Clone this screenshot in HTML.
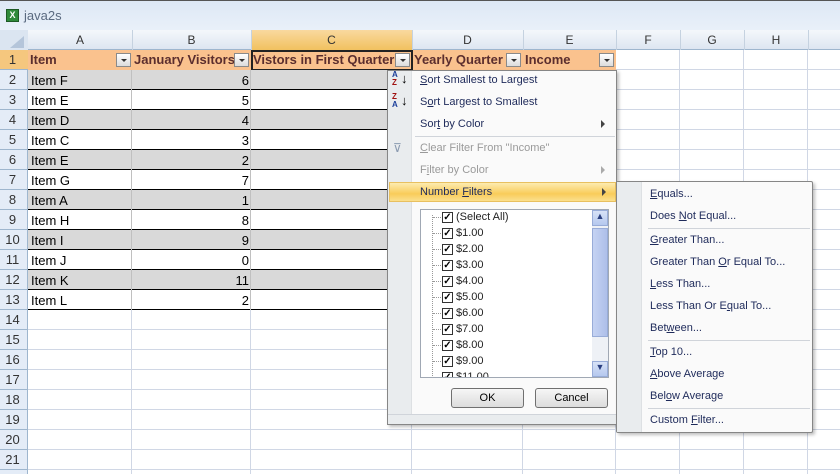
<!DOCTYPE html>
<html><head><meta charset="utf-8"><style>
*{margin:0;padding:0;box-sizing:border-box}
html,body{width:840px;height:474px;overflow:hidden}
body{background:#fff;font-family:"Liberation Sans",sans-serif;position:relative}
.a{position:absolute}
.t{font-size:13px;color:#000;white-space:nowrap}
.mi{position:absolute;font-size:11px;color:#1e2a5a;white-space:nowrap}
.dis{color:#9a9a9a}
.sep{position:absolute;height:1px;background:#d0d4da}
.dd{position:absolute;width:15px;height:14px;border:1px solid #8a8a8a;background:linear-gradient(#fff,#dcdcdc)}
.dd:after{content:"";position:absolute;left:4px;top:5px;border-left:3px solid transparent;border-right:3px solid transparent;border-top:3px solid #333}
.cb{position:absolute;width:11px;height:11px;border:1px solid #333;background:#fff;font-size:10px;line-height:9px;text-align:center;font-weight:bold}
</style></head><body>
<div class="a" style="left:0;top:0;width:840px;height:30px;background:linear-gradient(#dde8f5,#e9f0f9);border-top:1px solid #555"></div>
<div class="a" style="left:6px;top:9px;width:13px;height:13px;background:#2f8a3a;border:1px solid #1d5a25;color:#fff;font-size:9px;font-weight:bold;line-height:11px;text-align:center">X</div>
<div class="a" style="left:24px;top:8px;font-size:13px;color:#5a6a80">java2s</div>
<div class="a" style="left:0;top:30px;width:840px;height:20px;background:linear-gradient(#f4f7fb,#dde6f1);border-bottom:1px solid #9eb6ce"></div>
<div class="a" style="left:251px;top:30px;width:161px;height:20px;background:linear-gradient(#f9d99f,#f1c15f)"></div>
<div class="a" style="left:0;top:30px;width:28px;height:20px;background:#dbe5f1"></div>
<div class="a" style="left:10px;top:36px;width:0;height:0;border-left:14px solid transparent;border-bottom:12px solid #b4c5da"></div>
<div class="a" style="left:0;top:50px;width:28px;height:424px;background:#e4ecf7;border-right:1px solid #9eb6ce"></div>
<div class="a" style="left:0;top:50px;width:28px;height:20px;background:#f5c77e"></div>
<div id="grid"></div>
<script>
var cols=[[28,132,'A'],[132,251,'B'],[251,412,'C'],[412,523,'D'],[523,616,'E'],[616,680,'F'],[680,744,'G'],[744,808,'H'],[808,900,'']];
var h='';
cols.forEach(function(c){h+='<div class="a" style="left:'+c[1]+'px;top:30px;width:1px;height:20px;background:#c5d2e0"></div><div class="a" style="left:'+c[0]+'px;top:33px;width:'+(c[1]-c[0])+'px;text-align:center;font-size:12px;color:#333">'+c[2]+'</div>';
 h+='<div class="a" style="left:'+(c[1]-1)+'px;top:50px;width:1px;height:424px;background:#d0d7e5"></div>';});
for(var r=1;r<=22;r++){var y=50+(r-1)*20;
 h+='<div class="a" style="left:28px;top:'+(y+19)+'px;width:812px;height:1px;background:#d0d7e5"></div>';
 h+='<div class="a" style="left:0;top:'+(y+2)+'px;width:25px;text-align:center;font-size:13px;color:#333">'+r+'</div>';
 h+='<div class="a" style="left:0;top:'+(y+19)+'px;width:28px;height:1px;background:#9eb6ce"></div>';}
h+='<div class="a" style="left:28px;top:50px;width:588px;height:20px;background:#fac28e"></div>';
var hd=[[28,'Item'],[132,'January Visitors'],[251,'Vistors in First Quarter'],[412,'Yearly Quarter'],[523,'Income']];
hd.forEach(function(d){h+='<div class="a" style="left:'+(d[0]+2)+'px;top:52px;font-size:13px;font-weight:bold;color:#5b2e2e">'+d[1]+'</div>';});
[[116],[234],[395],[506],[599]].forEach(function(d){h+='<div class="dd" style="left:'+d[0]+'px;top:53px"></div>';});
h+='<div class="a" style="left:251px;top:50px;width:162px;height:21px;border:2px solid #222"></div>';
var data=[['Item F',6],['Item E',5],['Item D',4],['Item C',3],['Item E',2],['Item G',7],['Item A',1],['Item H',8],['Item I',9],['Item J',0],['Item K',11],['Item L',2]];
data.forEach(function(d,i){var y=70+i*20;
 if(i%2==0)h+='<div class="a" style="left:28px;top:'+y+'px;width:359px;height:20px;background:#d9d9d9"></div>';
 h+='<div class="a" style="left:28px;top:'+(y+19)+'px;width:359px;height:1px;background:#000"></div>';
 h+='<div class="a" style="left:131px;top:'+y+'px;width:1px;height:20px;background:#c0c0c0"></div><div class="a" style="left:250px;top:'+y+'px;width:1px;height:20px;background:#c0c0c0"></div>';
 h+='<div class="a t" style="left:31px;top:'+(y+3)+'px">'+d[0]+'</div><div class="a t" style="left:132px;top:'+(y+3)+'px;width:117px;text-align:right">'+d[1]+'</div>';});
document.getElementById('grid').innerHTML=h;
</script>
<div class="a" style="left:387px;top:70px;width:230px;height:355px;background:#fafafa;border:1px solid #868686;box-shadow:2px 2px 3px rgba(0,0,0,.25)"></div>
<div class="a" style="left:388px;top:71px;width:24px;height:353px;background:#e9ecee;border-right:1px solid #dde0e3"></div>
<div class="a" style="left:392px;top:71px;font-size:8px;font-weight:bold;line-height:8px;color:#1a3e9a">A<br><span style="color:#a01010">Z</span></div><div class="a" style="left:401px;top:71px;font-size:13px">↓</div>
<div class="a" style="left:392px;top:93px;font-size:8px;font-weight:bold;line-height:8px;color:#a01010">Z<br><span style="color:#1a3e9a">A</span></div><div class="a" style="left:401px;top:93px;font-size:13px">↓</div>
<div class="a" style="left:393px;top:141px;font-size:12px;color:#8a9ab0">⊽</div>
<div class="mi" style="left:420px;top:74px"><u>S</u>ort Smallest to Largest</div>
<div class="mi" style="left:420px;top:96px">S<u>o</u>rt Largest to Smallest</div>
<div class="mi" style="left:420px;top:118px">Sor<u>t</u> by Color</div>
<div class="a" style="left:601px;top:120px;border-top:4px solid transparent;border-bottom:4px solid transparent;border-left:4px solid #444"></div>
<div class="sep" style="left:415px;top:136px;width:200px"></div>
<div class="mi dis" style="left:420px;top:142px"><u>C</u>lear Filter From "Income"</div>
<div class="mi dis" style="left:420px;top:164px">F<u>i</u>lter by Color</div>
<div class="a" style="left:601px;top:166px;border-top:4px solid transparent;border-bottom:4px solid transparent;border-left:4px solid #aaa"></div>
<div class="a" style="left:389px;top:182px;width:227px;height:20px;background:linear-gradient(#fdebb0,#f9cc5a 60%,#fbe08e);border:1px solid #e8c060"></div>
<div class="mi" style="left:420px;top:186px">Number <u>F</u>ilters</div>
<div class="a" style="left:602px;top:188px;border-top:4px solid transparent;border-bottom:4px solid transparent;border-left:4px solid #444"></div>
<div class="a" style="left:420px;top:209px;width:189px;height:169px;background:#fff;border:1px solid #a0a8b4;overflow:hidden">
<div class="a" style="left:11px;top:5px;width:1px;height:165px;border-left:1px dotted #999"></div>
<div id="list"></div>
<div class="a" style="left:171px;top:0;width:16px;height:167px;background:#eef1f6"></div>
<div class="a" style="left:171px;top:0;width:16px;height:16px;background:linear-gradient(#d7e2f7,#b5c8ee);border:1px solid #98acd8;font-size:9px;text-align:center;color:#2a3f80">▲</div>
<div class="a" style="left:171px;top:18px;width:16px;height:109px;background:linear-gradient(90deg,#c5d3f3,#aebfe9);border:1px solid #98acd8"></div>
<div class="a" style="left:171px;top:151px;width:16px;height:16px;background:linear-gradient(#d7e2f7,#b5c8ee);border:1px solid #98acd8;font-size:9px;text-align:center;color:#2a3f80">▼</div>
</div>
<script>
var l='',it=['(Select All)','$1.00','$2.00','$3.00','$4.00','$5.00','$6.00','$7.00','$8.00','$9.00','$11.00'];
it.forEach(function(s,i){var y=1+i*16;
 l+='<div class="a" style="left:12px;top:'+(y+6)+'px;width:8px;border-top:1px dotted #999"></div><div class="cb" style="left:21px;top:'+(y+1)+'px">✓</div><div class="a" style="left:35px;top:'+y+'px;font-size:11px;color:#222">'+s+'</div>';});
document.getElementById('list').innerHTML=l;
</script>
<div class="a" style="left:451px;top:388px;width:73px;height:20px;border:1px solid #707070;border-radius:3px;background:linear-gradient(#f6f6f6,#dcdcdc);font-size:11px;text-align:center;line-height:18px">OK</div>
<div class="a" style="left:535px;top:388px;width:73px;height:20px;border:1px solid #707070;border-radius:3px;background:linear-gradient(#f6f6f6,#dcdcdc);font-size:11px;text-align:center;line-height:18px">Cancel</div>
<div class="a" style="left:388px;top:414px;width:228px;height:10px;background:#e9ecee;border-top:1px solid #d0d4da"></div>
<div class="a" style="left:616px;top:181px;width:197px;height:252px;background:#fafafa;border:1px solid #868686;border-radius:2px;box-shadow:2px 2px 3px rgba(0,0,0,.25)"></div>
<div class="a" style="left:617px;top:182px;width:25px;height:250px;background:#e9ecee;border-right:1px solid #dde0e3"></div>
<div class="mi" style="left:650px;top:188px"><u>E</u>quals...</div>
<div class="mi" style="left:650px;top:210px">Does <u>N</u>ot Equal...</div>
<div class="sep" style="left:648px;top:228px;width:162px"></div>
<div class="mi" style="left:650px;top:234px"><u>G</u>reater Than...</div>
<div class="mi" style="left:650px;top:256px">Greater Than <u>O</u>r Equal To...</div>
<div class="mi" style="left:650px;top:278px"><u>L</u>ess Than...</div>
<div class="mi" style="left:650px;top:300px">Less Than Or E<u>q</u>ual To...</div>
<div class="mi" style="left:650px;top:322px">Bet<u>w</u>een...</div>
<div class="sep" style="left:648px;top:340px;width:162px"></div>
<div class="mi" style="left:650px;top:346px"><u>T</u>op 10...</div>
<div class="mi" style="left:650px;top:368px"><u>A</u>bove Average</div>
<div class="mi" style="left:650px;top:390px">Bel<u>o</u>w Average</div>
<div class="sep" style="left:648px;top:408px;width:162px"></div>
<div class="mi" style="left:650px;top:414px">Custom <u>F</u>ilter...</div>
</body></html>
